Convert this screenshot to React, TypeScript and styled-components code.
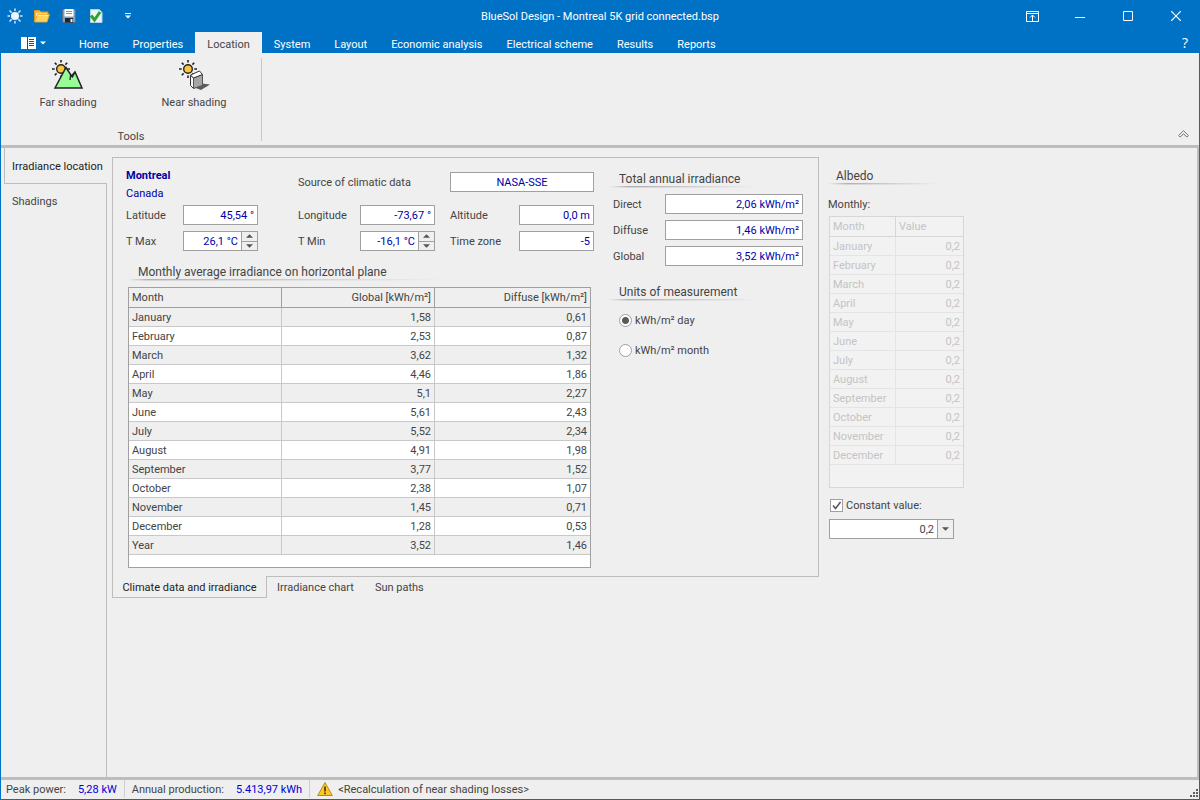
import React, { useState } from "react";
import styled, { createGlobalStyle, css } from "styled-components";

const BLUE = "#0072c6";
const FACE = "#efefef";
const LINE = "#bdbdbd";
const EDGE = "#a0a0a0";
const INK = "#444444";
const VALUE = "#0000a8";

const GlobalStyle = createGlobalStyle`
  * { box-sizing: border-box; }
  body {
    margin: 0;
    background: ${FACE};
  }
  body, button, input, select {
    font-family: Tahoma, Roboto, "DejaVu Sans Condensed", sans-serif;
    font-size: 11px;
    color: ${INK};
  }
  button { margin: 0; padding: 0; border: 0; background: none; cursor: pointer; }
  svg { display: block; flex: none; }
`;

const Window = styled.div`
  display: flex;
  flex-direction: column;
  min-height: 100vh;
  border: 1px solid ${BLUE};
  border-top: 0;
`;

/* ---- title bar and ribbon tabs ---- */

const TitleBar = styled.header`
  display: grid;
  grid-template-columns: 1fr auto 1fr;
  align-items: center;
  height: 32px;
  background: ${BLUE};
  color: #fff;
`;

const QuickBar = styled.div`
  display: flex;
  align-items: center;
  gap: 11px;
  padding-left: 6px;
`;

const IconButton = styled.button`
  display: flex;
  align-items: center;
  justify-content: center;
  width: 16px;
  height: 16px;
`;

const MoreButton = styled(IconButton)`
  margin-left: 5px;
`;

const Title = styled.h1`
  margin: 0;
  font-size: 11px;
  font-weight: normal;
`;

const WindowButtons = styled.div`
  display: flex;
  justify-content: flex-end;
  margin-right: -1px;
`;

const WindowButton = styled.button`
  display: flex;
  align-items: center;
  justify-content: center;
  width: 48px;
  height: 32px;
`;

const TabBar = styled.nav`
  display: flex;
  height: 21px;
  padding-left: 18px;
  background: ${BLUE};
`;

const FileButton = styled.button`
  display: flex;
  align-items: center;
  gap: 4px;
  width: 48px;
  padding-left: 2px;
`;

const RibbonTab = styled.button<{ $active?: boolean }>`
  padding: 3px 12px 0;
  color: ${(p) => (p.$active ? INK : "#fff")};
  background: ${(p) => (p.$active ? FACE : "transparent")};
`;

const HelpButton = styled.button`
  width: 14px;
  margin-left: auto;
  margin-right: 7px;
  color: #fff;
  font-family: "Open Sans", sans-serif;
  font-size: 14px;
  line-height: 20px;
`;

const Ribbon = styled.section`
  display: flex;
  height: 95px;
  padding: 5px 10px 4px 0;
  background: ${FACE};
  border-bottom: 3px solid ${LINE};
`;

const RibbonGroup = styled.div`
  display: flex;
  flex-direction: column;
  justify-content: space-between;
  width: 261px;
  padding: 0 4px;
  border-right: 1px solid #c8c8c8;
`;

const RibbonTools = styled.div`
  display: flex;
`;

const ToolButton = styled.button`
  display: flex;
  flex-direction: column;
  align-items: center;
  gap: 6px;
  flex: 1;
  height: 54px;
`;

const GroupName = styled.div`
  text-align: center;
  line-height: 9px;
`;

const CollapseButton = styled.button`
  align-self: flex-end;
  margin-left: auto;
  margin-bottom: 2px;
`;

/* ---- work area ---- */

const Work = styled.main`
  flex: 1;
  display: flex;
  padding-left: 3px;
  border-right: 2px solid ${LINE};
  border-bottom: 3px solid ${LINE};
`;

const SideTabs = styled.nav`
  display: flex;
  flex-direction: column;
  width: 103px;
`;

const SideTab = styled.button<{ $active?: boolean }>`
  height: 36px;
  text-align: left;
  white-space: nowrap;
  ${(p) =>
    p.$active
      ? css`
          padding: 1px 0 0 7px;
          color: #222;
          border-left: 1px solid ${LINE};
          border-bottom: 1px solid ${LINE};
        `
      : css`
          padding: 0 0 2px 8px;
          border-right: 1px solid ${LINE};
        `}
`;

const SideRest = styled.div`
  flex: 1;
  border-right: 1px solid ${LINE};
`;

const Content = styled.div`
  flex: 1;
  display: flex;
  align-items: flex-start;
  gap: 9px;
  padding: 9px 5px;
`;

const Panel = styled.div`
  display: flex;
  width: 707px;
  height: 420px;
  border: 1px solid ${LINE};
`;

const ClimateColumn = styled.div`
  width: 487px;
  padding: 4px 0 0 13px;
`;

const IrradianceColumn = styled.div`
  flex: 1;
  padding: 11px 15px 0 13px;
`;

const Place = styled.div`
  display: flex;
  justify-content: space-between;
  width: 468px;
  height: 43px;
`;

const PlaceName = styled.div`
  padding-top: 5px;
  line-height: 18px;
  color: ${VALUE};
`;

const Source = styled.label`
  display: grid;
  grid-template-columns: 152px 144px;
  align-items: center;
  height: 40px;
`;

const FieldGrid = styled.div`
  display: grid;
  grid-template-columns: 57px 75px 102px 75px 84px 75px;
  row-gap: 6px;
  align-items: center;
  justify-content: start;
`;

const FieldLabel = styled.label<{ $indent?: number }>`
  padding-left: ${(p) => p.$indent ?? 0}px;
`;

const Box = styled.input<{ $center?: boolean }>`
  width: 100%;
  height: 20px;
  padding: 0 3px;
  border: 1px solid ${EDGE};
  border-radius: 0;
  outline: 0;
  background: #fff;
  color: ${VALUE};
  text-align: ${(p) => (p.$center ? "center" : "right")};
`;

const Spin = styled.div`
  display: flex;
  height: 20px;
  border: 1px solid ${EDGE};
  background: #fff;
`;

const SpinInput = styled(Box)`
  flex: 1;
  width: 0;
  height: 18px;
  border: 0;
`;

const SpinButtons = styled.div`
  display: flex;
  flex-direction: column;
  width: 16px;
  border-left: 1px solid ${EDGE};
  background: ${FACE};
`;

const SpinButton = styled.button`
  display: flex;
  flex: 1;
  align-items: center;
  justify-content: center;
  & + & {
    border-top: 1px solid ${EDGE};
  }
`;

const Heading = styled.h2<{ $top?: number; $line: number }>`
  height: 20px;
  margin: ${(p) => p.$top ?? 0}px 0 0;
  padding-left: 8px;
  font-size: 12px;
  font-weight: normal;
  line-height: 20px;
  white-space: nowrap;
  background:
    linear-gradient(90deg, rgba(160, 160, 160, 0) 0, #b0b0b0 20px, rgba(160, 160, 160, 0) 100%) 0 17px / ${(p) => p.$line}px 1px no-repeat,
    linear-gradient(90deg, rgba(200, 200, 200, 0) 0, #d4d4d4 20px, rgba(200, 200, 200, 0) 100%) 0 18px / ${(p) => p.$line}px 1px no-repeat;
`;

const ClimateHeading = styled(Heading)`
  margin-left: 2px;
  padding-left: 10px;
`;

const IrradianceHeading = styled(Heading)`
  margin-left: -4px;
  padding-left: 10px;
`;

const GridFrame = styled.div<{ $disabled?: boolean }>`
  width: ${(p) => (p.$disabled ? 135 : 463)}px;
  height: ${(p) => (p.$disabled ? 272 : 281)}px;
  border: 1px solid ${(p) => (p.$disabled ? "#d6d6d6" : EDGE)};
  background: ${(p) => (p.$disabled ? "#f2f2f2" : "#fff")};
`;

const ClimateGrid = styled(GridFrame)`
  margin: 5px 0 0 2px;
`;

const Table = styled.table<{ $disabled?: boolean }>`
  width: 100%;
  table-layout: fixed;
  border-collapse: separate;
  border-spacing: 0;
  color: ${(p) => (p.$disabled ? "#c4c4c4" : INK)};
  th, td {
    height: 19px;
    padding: 2px 3px 0;
    line-height: 16px;
    font-weight: normal;
    text-align: right;
    border-right: 1px solid ${(p) => (p.$disabled ? "#e4e4e4" : "#c8c8c8")};
    border-bottom: 1px solid ${(p) => (p.$disabled ? "#e4e4e4" : "#c8c8c8")};
  }
  th {
    height: 20px;
    padding-top: 0;
    line-height: 18px;
    background: ${(p) => (p.$disabled ? "transparent" : FACE)};
    border-color: ${(p) => (p.$disabled ? "#d6d6d6" : EDGE)};
    text-align: ${(p) => (p.$disabled ? "left" : "right")};
  }
  th:first-child, td:first-child { text-align: left; }
  th:last-child, td:last-child { border-right: 0; }
  tbody tr:nth-child(odd) { background: ${(p) => (p.$disabled ? "transparent" : FACE)}; }
`;

const Col = styled.col<{ $w?: number }>`
  width: ${(p) => (p.$w ? `${p.$w}px` : "auto")};
`;

const Totals = styled.div`
  display: grid;
  grid-template-columns: 52px 138px;
  row-gap: 6px;
  align-items: center;
  margin-top: 5px;
`;

const Radios = styled.div`
  display: flex;
  flex-direction: column;
  gap: 16px;
  padding: 11px 0 0 6px;
`;

const Choice = styled.label`
  display: flex;
  align-items: center;
  gap: 3px;
  height: 14px;
`;

const Radio = styled.input`
  appearance: none;
  width: 13px;
  height: 13px;
  margin: 0;
  border: 1px solid ${EDGE};
  border-radius: 50%;
  background: #fff;
  &:checked {
    background: radial-gradient(circle, #5a5a5a 0 3px, #fff 4px);
  }
`;

const PageTabs = styled.nav`
  display: flex;
  margin-top: -1px;
`;

const PageTab = styled.button<{ $active?: boolean }>`
  height: 22px;
  padding: 0 11px 0 10px;
  ${(p) =>
    p.$active &&
    css`
      width: 155px;
      padding: 1px 0 0;
      color: #222;
      background: ${FACE};
      border: 1px solid ${LINE};
      border-top: 0;
    `}
`;

const Albedo = styled.section`
  padding-top: 9px;
`;

const MonthlyLabel = styled.div`
  margin: 12px 0 4px;
  line-height: 14px;
`;

const AlbedoGrid = styled(GridFrame)`
  margin-left: 1px;
`;

const ConstantChoice = styled(Choice)`
  margin: 10px 0 7px 2px;
`;

const Check = styled.span`
  display: grid;
  width: 13px;
  height: 13px;
  input, svg { grid-area: 1 / 1; }
  svg { pointer-events: none; }
  input:not(:checked) + svg { display: none; }
`;

const CheckInput = styled.input`
  appearance: none;
  width: 13px;
  height: 13px;
  margin: 0;
  border: 1px solid ${EDGE};
  background: #fff;
`;

const Combo = styled.div`
  display: grid;
  grid-template-columns: 107px 16px;
  width: 125px;
  height: 20px;
  margin-left: 1px;
  border: 1px solid ${EDGE};
  background: #fff;
`;

const ComboSelect = styled.select`
  grid-area: 1 / 1 / 2 / 3;
  appearance: none;
  padding: 0 19px 0 3px;
  border: 0;
  border-radius: 0;
  outline: 0;
  background: transparent;
  text-align: right;
  text-align-last: right;
`;

const ComboArrow = styled.span`
  grid-area: 1 / 2;
  display: flex;
  align-items: center;
  justify-content: center;
  border-left: 1px solid ${EDGE};
  background: ${FACE};
  pointer-events: none;
`;

/* ---- status bar ---- */

const StatusBar = styled.footer`
  display: flex;
  align-items: center;
  height: 19px;
  padding: 0 0 1px 5px;
`;

const Status = styled.div`
  display: flex;
  align-items: center;
  gap: 12px;
  height: 18px;
  padding-right: 7px;
  margin-right: 7px;
  border-right: 1px solid #cfcfcf;
`;

const StatusValue = styled.span`
  color: #0000d8;
`;

const Message = styled.div`
  display: flex;
  align-items: center;
  gap: 5px;
`;

const Grip = styled.div`
  align-self: flex-end;
  margin-left: auto;
`;

/* ---- drawings ---- */

const SunGlyph = () => (
  <svg width="16" height="16" viewBox="0 0 16 16">
    <circle cx="8" cy="8" r="4" fill="#eef8ff" />
    <path d="M8 0.500V3M8 13v2.500M0.500 8H3M13 8h2.500M2.500 2.500l2.200 2.200M11.300 11.300l2.200 2.200M13.500 2.500l-2.200 2.200M4.700 11.300l-2.200 2.200" stroke="#cfe9fa" strokeWidth="1.500" />
  </svg>
);

const FolderGlyph = () => (
  <svg width="16" height="16" viewBox="0 0 16 16">
    <path d="M0.500 13.500V2.500h5l1.500 1.500h7V8" fill="#f0b93c" stroke="#d99a1e" />
    <path d="M2 5.500h11V8H2z" fill="#fff6cf" />
    <path d="M0.600 14L3.500 6.500h12l-2.500 7.500z" fill="#ffd35c" stroke="#f0a820" strokeWidth="0.800" />
    <path d="M4 7.500h10" stroke="#fff0b0" />
  </svg>
);

const DiskGlyph = () => (
  <svg width="16" height="16" viewBox="0 0 16 16">
    <path d="M1.500 1.500h13v13h-12l-1-1z" fill="#86a0bc" stroke="#51708f" />
    <path d="M3.500 1h9v7.500h-9z" fill="#fff" />
    <path d="M5 3.500h6M5 5.500h6" stroke="#8296aa" />
    <path d="M4 10h8v4.500H4z" fill="#1d2733" />
    <path d="M9.500 11h2v3h-2z" fill="#eef2f5" />
  </svg>
);

const ValidateGlyph = () => (
  <svg width="16" height="16" viewBox="0 0 16 16">
    <path d="M2.500 1.500h8.500l3 3v10H2.500z" fill="#eaf4fb" stroke="#b4d0e4" />
    <path d="M11 1.500v3h3" fill="#fff" stroke="#b4d0e4" />
    <path d="M3 7.500l3.500 4.500L12 4" fill="none" stroke="#2da32f" strokeWidth="3" />
  </svg>
);

const SunRays = () => (
  <g>
    <circle cx="10" cy="11" r="4.300" fill="#fcc63c" stroke="#222" strokeWidth="1.400" />
    <path d="M10 2v2.500M10 17.500v2.500M1 11h2.700M16.300 11H19M3.800 4.800l1.800 1.800M16.200 4.800l-1.800 1.800M3.800 17.200l1.800-1.800M16.200 17.200l-1.800-1.800" stroke="#222" strokeWidth="1.600" />
  </g>
);

const FarShading = () => (
  <svg width="32" height="32" viewBox="0 0 32 32">
    <g transform="translate(-1 0)"><SunRays /></g>
    <path d="M3 30L14 9.500l5.500 8.500 3.500-4L30 30z" fill="#98fb98" stroke="#222" strokeWidth="1.500" />
    <path d="M23 14l-2.500 5-2-1.500-0.500 4.500" fill="none" stroke="#222" strokeWidth="1.300" />
  </svg>
);

const NearShading = () => (
  <svg width="32" height="32" viewBox="0 0 32 32">
    <SunRays />
    <path d="M15 29l9-3.500 8 1-9 5.500z" fill="#5c5c5c" />
    <path d="M12.500 17l3 3v10.500l-3-3z" fill="#fff" stroke="#333" />
    <path d="M15.500 20l9-3.500V27.500l-9 3z" fill="#a6a6a6" stroke="#555" />
    <path d="M12.500 17l9-4 3 3.500-9 3.500z" fill="#fff" stroke="#333" />
  </svg>
);

const Triangle = ({ up, w = 7, fill = "#555" }: { up?: boolean; w?: number; fill?: string }) => (
  <svg width={w} height="4" viewBox="0 0 8 4">
    <path d={up ? "M0 4L4 0l4 4z" : "M0 0h8L4 4z"} fill={fill} />
  </svg>
);

const FileGlyph = () => (
  <svg width="15" height="12" viewBox="0 0 15 12">
    <path d="M0 0h15v12H0z" fill="#fff" />
    <path d="M6.500 0v12M8 2.500h5M8 4.500h5M8 6.500h5M8 8.500h5" stroke="#444" />
  </svg>
);

const Warning = () => (
  <svg width="16" height="16" viewBox="0 0 16 16">
    <path d="M8 1.500L15.300 14.500H0.700z" fill="#fbc926" stroke="#b98a1a" strokeLinejoin="round" />
    <path d="M8 5.500v5M8 11.500v1.800" stroke="#4a3a10" strokeWidth="1.700" />
  </svg>
);

/* ---- data ---- */

const tabs = ["Home", "Properties", "Location", "System", "Layout", "Economic analysis", "Electrical scheme", "Results", "Reports"];

const climate: [string, string, string][] = [
  ["January", "1,58", "0,61"],
  ["February", "2,53", "0,87"],
  ["March", "3,62", "1,32"],
  ["April", "4,46", "1,86"],
  ["May", "5,1", "2,27"],
  ["June", "5,61", "2,43"],
  ["July", "5,52", "2,34"],
  ["August", "4,91", "1,98"],
  ["September", "3,77", "1,52"],
  ["October", "2,38", "1,07"],
  ["November", "1,45", "0,71"],
  ["December", "1,28", "0,53"],
  ["Year", "3,52", "1,46"],
];

const totals = [
  ["Direct", "2,06 kWh/m²"],
  ["Diffuse", "1,46 kWh/m²"],
  ["Global", "3,52 kWh/m²"],
];

const SpinField = ({ id, value }: { id: string; value: string }) => (
  <Spin>
    <SpinInput id={id} defaultValue={value} />
    <SpinButtons>
      <SpinButton aria-label="Increase"><Triangle up /></SpinButton>
      <SpinButton aria-label="Decrease"><Triangle /></SpinButton>
    </SpinButtons>
  </Spin>
);

export default function App() {
  const [tab, setTab] = useState("Location");
  const [unit, setUnit] = useState("day");

  return (
    <>
      <GlobalStyle />
      <Window>
        <TitleBar>
          <QuickBar>
            <IconButton aria-label="BlueSol"><SunGlyph /></IconButton>
            <IconButton aria-label="Open"><FolderGlyph /></IconButton>
            <IconButton aria-label="Save"><DiskGlyph /></IconButton>
            <IconButton aria-label="Validate"><ValidateGlyph /></IconButton>
            <MoreButton aria-label="Customize">
              <svg width="6" height="6" viewBox="0 0 6 6">
                <path d="M0 0h6v1H0zM0 2.500h6L3 5.500z" fill="#fff" />
              </svg>
            </MoreButton>
          </QuickBar>
          <Title>BlueSol Design - Montreal 5K grid connected.bsp</Title>
          <WindowButtons>
            <WindowButton aria-label="Ribbon display options">
              <svg width="13" height="11" viewBox="0 0 13 11">
                <path d="M0.500 0.500h12v10H0.500zM0.500 2.500h12M6.500 10V4M4 6.500L6.500 4 9 6.500" fill="none" stroke="#fff" />
              </svg>
            </WindowButton>
            <WindowButton aria-label="Minimize">
              <svg width="10" height="3" viewBox="0 0 10 3"><path d="M0 2.500h10" stroke="#fff" /></svg>
            </WindowButton>
            <WindowButton aria-label="Maximize">
              <svg width="10" height="10" viewBox="0 0 10 10"><path d="M0.500 0.500h9v9h-9z" fill="none" stroke="#fff" /></svg>
            </WindowButton>
            <WindowButton aria-label="Close">
              <svg width="10" height="10" viewBox="0 0 10 10"><path d="M0 0l10 10M10 0L0 10" stroke="#fff" strokeWidth="1.200" /></svg>
            </WindowButton>
          </WindowButtons>
        </TitleBar>

        <TabBar>
          <FileButton aria-label="File">
            <FileGlyph />
            <Triangle w={6} fill="#fff" />
          </FileButton>
          {tabs.map((name) => (
            <RibbonTab key={name} $active={name === tab} onClick={() => setTab(name)}>{name}</RibbonTab>
          ))}
          <HelpButton aria-label="Help">?</HelpButton>
        </TabBar>

        <Ribbon>
          <RibbonGroup>
            <RibbonTools>
              <ToolButton><FarShading />Far shading</ToolButton>
              <ToolButton><NearShading />Near shading</ToolButton>
            </RibbonTools>
            <GroupName>Tools</GroupName>
          </RibbonGroup>
          <CollapseButton aria-label="Collapse the ribbon">
            <svg width="11" height="9" viewBox="0 0 11 9">
              <path d="M0.700 5.500L5.500 0.800l4.800 4.700-1.500 1.500-3.300-3.200L2.200 7z" fill="#fff" stroke="#666" />
            </svg>
          </CollapseButton>
        </Ribbon>

        <Work>
          <SideTabs>
            <SideTab $active>Irradiance location</SideTab>
            <SideTab>Shadings</SideTab>
            <SideRest />
          </SideTabs>

          <Content>
            <div>
              <Panel>
                <ClimateColumn>
                  <Place>
                    <PlaceName>
                      <strong>Montreal</strong>
                      <div>Canada</div>
                    </PlaceName>
                    <Source>
                      Source of climatic data
                      <Box $center defaultValue="NASA-SSE" />
                    </Source>
                  </Place>
                  <FieldGrid>
                    <FieldLabel htmlFor="latitude">Latitude</FieldLabel>
                    <Box id="latitude" defaultValue="45,54 °" />
                    <FieldLabel $indent={40} htmlFor="longitude">Longitude</FieldLabel>
                    <Box id="longitude" defaultValue="-73,67 °" />
                    <FieldLabel $indent={15} htmlFor="altitude">Altitude</FieldLabel>
                    <Box id="altitude" defaultValue="0,0 m" />
                    <FieldLabel htmlFor="tmax">T Max</FieldLabel>
                    <SpinField id="tmax" value="26,1 °C" />
                    <FieldLabel $indent={40} htmlFor="tmin">T Min</FieldLabel>
                    <SpinField id="tmin" value="-16,1 °C" />
                    <FieldLabel $indent={15} htmlFor="zone">Time zone</FieldLabel>
                    <Box id="zone" defaultValue="-5" />
                  </FieldGrid>
                  <ClimateHeading $top={11} $line={320}>Monthly average irradiance on horizontal plane</ClimateHeading>
                  <ClimateGrid>
                    <Table>
                      <colgroup>
                        <Col $w={153} />
                        <Col $w={153} />
                        <Col />
                      </colgroup>
                      <thead>
                        <tr><th>Month</th><th>Global [kWh/m²]</th><th>Diffuse [kWh/m²]</th></tr>
                      </thead>
                      <tbody>
                        {climate.map(([month, global, diffuse]) => (
                          <tr key={month}><td>{month}</td><td>{global}</td><td>{diffuse}</td></tr>
                        ))}
                      </tbody>
                    </Table>
                  </ClimateGrid>
                </ClimateColumn>

                <IrradianceColumn>
                  <IrradianceHeading $line={150}>Total annual irradiance</IrradianceHeading>
                  <Totals>
                    {totals.map(([name, value]) => (
                      <React.Fragment key={name}>
                        <label htmlFor={name}>{name}</label>
                        <Box id={name} defaultValue={value} />
                      </React.Fragment>
                    ))}
                  </Totals>
                  <IrradianceHeading $top={16} $line={150}>Units of measurement</IrradianceHeading>
                  <Radios>
                    <Choice>
                      <Radio type="radio" name="unit" checked={unit === "day"} onChange={() => setUnit("day")} />
                      kWh/m² day
                    </Choice>
                    <Choice>
                      <Radio type="radio" name="unit" checked={unit === "month"} onChange={() => setUnit("month")} />
                      kWh/m² month
                    </Choice>
                  </Radios>
                </IrradianceColumn>
              </Panel>
              <PageTabs>
                <PageTab $active>Climate data and irradiance</PageTab>
                <PageTab>Irradiance chart</PageTab>
                <PageTab>Sun paths</PageTab>
              </PageTabs>
            </div>

            <Albedo>
              <Heading $line={110}>Albedo</Heading>
              <MonthlyLabel>Monthly:</MonthlyLabel>
              <AlbedoGrid $disabled>
                <Table $disabled>
                  <colgroup>
                    <Col $w={66} />
                    <Col />
                  </colgroup>
                  <thead>
                    <tr><th>Month</th><th>Value</th></tr>
                  </thead>
                  <tbody>
                    {climate.slice(0, 12).map(([month]) => (
                      <tr key={month}><td>{month}</td><td>0,2</td></tr>
                    ))}
                  </tbody>
                </Table>
              </AlbedoGrid>
              <ConstantChoice>
                <Check>
                  <CheckInput type="checkbox" defaultChecked />
                  <svg width="13" height="13" viewBox="0 0 13 13">
                    <path d="M3 6.500l2.500 3L10.500 3" fill="none" stroke="#555" strokeWidth="1.500" />
                  </svg>
                </Check>
                Constant value:
              </ConstantChoice>
              <Combo>
                <ComboSelect aria-label="Constant albedo value" defaultValue="0,2">
                  <option>0,2</option>
                </ComboSelect>
                <ComboArrow><Triangle /></ComboArrow>
              </Combo>
            </Albedo>
          </Content>
        </Work>

        <StatusBar>
          <Status>Peak power:<StatusValue>5,28 kW</StatusValue></Status>
          <Status>Annual production:<StatusValue>5.413,97 kWh</StatusValue></Status>
          <Message><Warning />&lt;Recalculation of near shading losses&gt;</Message>
          <Grip>
            <svg width="9" height="9" viewBox="0 0 9 9">
              <path d="M6 0h2v2H6zM3 3h2v2H3zM6 3h2v2H6zM0 6h2v2H0zM3 6h2v2H3zM6 6h2v2H6z" fill="#606060" />
            </svg>
          </Grip>
        </StatusBar>
      </Window>
    </>
  );
}
